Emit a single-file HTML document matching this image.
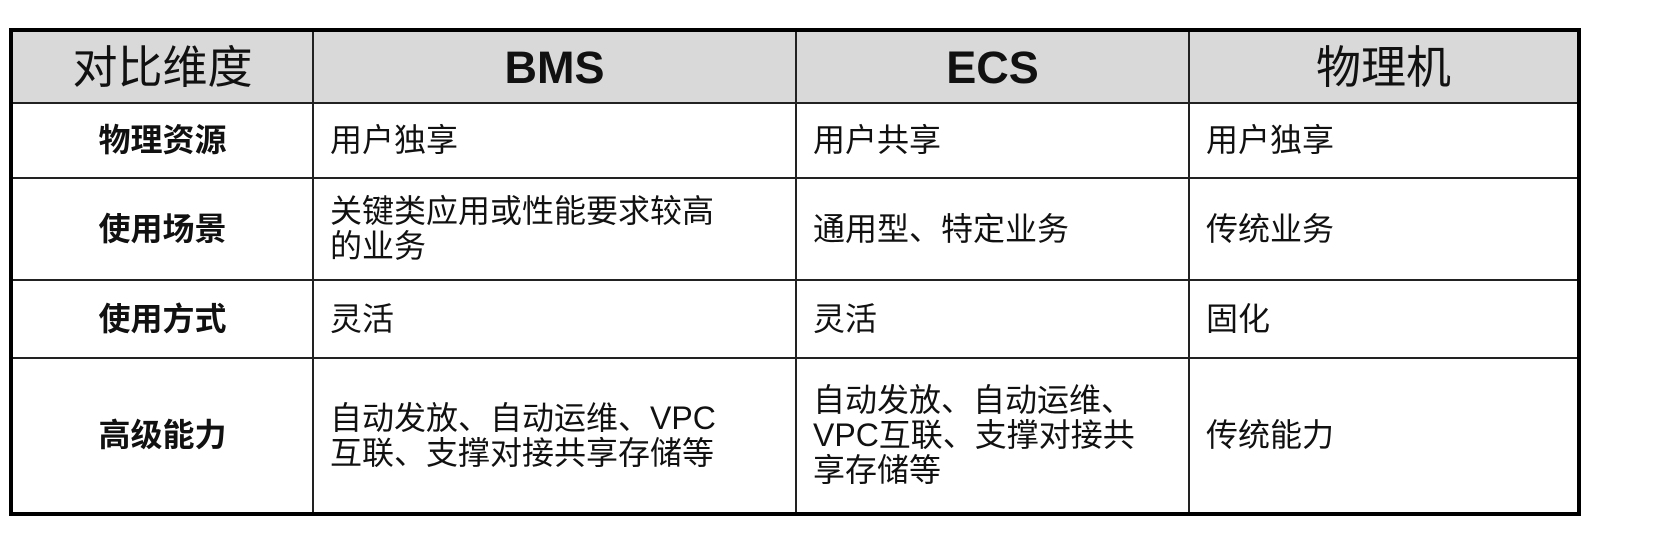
<!DOCTYPE html>
<html><head><meta charset="utf-8"><style>
body{margin:0;width:1677px;height:547px;background:#fff;overflow:hidden;font-family:"Liberation Sans","Noto Sans CJK SC",sans-serif;color:#111}
table{position:absolute;left:9px;top:28px;border-collapse:collapse;border:4px solid #000;table-layout:fixed}
td{border:2px solid #222;padding:0 0 0 16px;font-size:32px;line-height:35px;vertical-align:middle}
tr.h td{background:#d9d9d9;font-size:45px;height:70px;text-align:center;padding:0;font-weight:bold}
tr.h td.n{font-weight:normal}
td.l{text-align:center;padding:0;font-weight:bold}
</style></head><body>
<table>
<colgroup><col style="width:302px"><col style="width:483px"><col style="width:393px"><col style="width:390px"></colgroup>
<tr class="h"><td class="n">对比维度</td><td>BMS</td><td>ECS</td><td class="n">物理机</td></tr>
<tr style="height:75px"><td class="l">物理资源</td><td>用户独享</td><td>用户共享</td><td>用户独享</td></tr>
<tr style="height:102px"><td class="l">使用场景</td><td>关键类应用或性能要求较高<br>的业务</td><td>通用型、特定业务</td><td>传统业务</td></tr>
<tr style="height:78px"><td class="l">使用方式</td><td>灵活</td><td>灵活</td><td>固化</td></tr>
<tr style="height:156px"><td class="l">高级能力</td><td>自动发放、自动运维、VPC<br>互联、支撑对接共享存储等</td><td>自动发放、自动运维、<br>VPC互联、支撑对接共<br>享存储等</td><td>传统能力</td></tr>
</table>
</body></html>
